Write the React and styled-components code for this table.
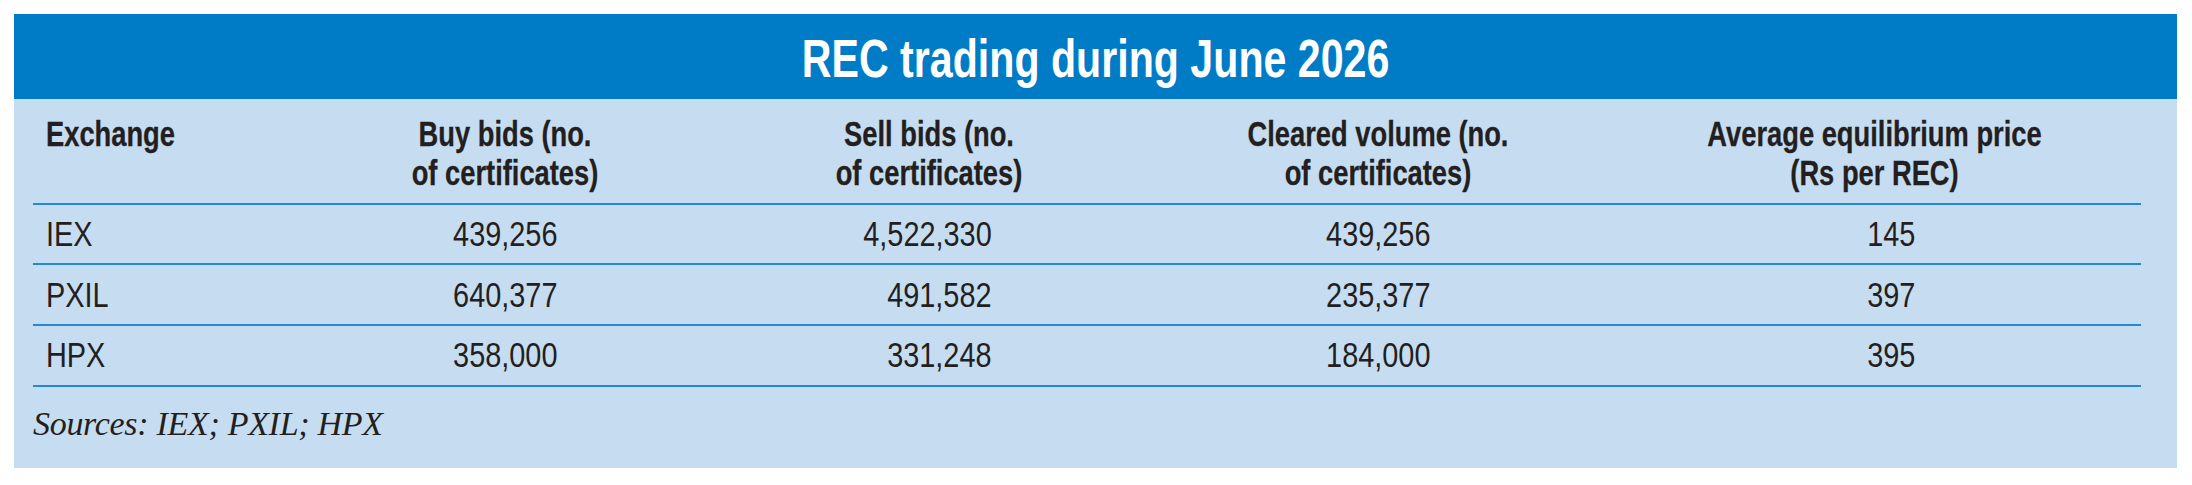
import React from 'react';
import styled, { createGlobalStyle } from 'styled-components';

// ============================================
// DATA
// ============================================
const columns = [
  { key: 'exchange', label: ['Exchange'], align: 'left' },
  { key: 'buy', label: ['Buy bids (no.', 'of certificates)'], align: 'center' },
  { key: 'sell', label: ['Sell bids (no.', 'of certificates)'], align: 'center', numPad: 156 },
  { key: 'cleared', label: ['Cleared volume (no.', 'of certificates)'], align: 'center' },
  { key: 'price', label: ['Average equilibrium price', '(Rs per REC)'], align: 'center', numPad: 226 },
];

const rows = [
  { exchange: 'IEX', buy: '439,256', sell: '4,522,330', cleared: '439,256', price: '145' },
  { exchange: 'PXIL', buy: '640,377', sell: '491,582', cleared: '235,377', price: '397' },
  { exchange: 'HPX', buy: '358,000', sell: '331,248', cleared: '184,000', price: '395' },
];

// no narrow face installed, so the condensed look comes from a horizontal squeeze
const origin = (align, right) => (align === 'left' ? 'left' : right ? 'right' : 'center');

// ============================================
// STYLED COMPONENTS
// ============================================
const GlobalStyle = createGlobalStyle`
  html, body {
    margin: 0;
    padding: 0;
    background: #ffffff;
  }
`;

const Panel = styled.div`
  margin: 14px 0 0 14px;
  width: 2163px;
  height: 454px;
  background: #c6dcf1;
  font-family: 'Liberation Sans', Arial, sans-serif;
  color: #231f20;
  box-sizing: border-box;
`;

const TitleBar = styled.div`
  height: 85px;
  padding-top: 3px;
  box-sizing: border-box;
  background: #007cc7;
  display: flex;
  align-items: center;
  justify-content: center;
`;

const Title = styled.h1`
  margin: 0;
  font-size: 54px;
  line-height: 1;
  font-weight: 700;
  color: #ffffff;
  white-space: nowrap;
  transform: scaleX(0.762);
`;

const Table = styled.div`
  padding: 0 36px 0 19px;
`;

const Row = styled.div`
  display: grid;
  grid-template-columns: 267px 410px 438px 460px 533px;
  border-bottom: 2px solid #2389d6;
`;

const HeadRow = styled(Row)`
  padding: 14.5px 0 10px;
`;

const HeadCell = styled.div`
  padding-left: ${p => (p.$align === 'left' ? '13px' : '0')};
  text-align: ${p => p.$align};
`;

const HeadText = styled.div`
  font-size: 35px;
  line-height: 39.5px;
  font-weight: 700;
  white-space: nowrap;
  -webkit-text-stroke: 0.3px #231f20;
  transform: scaleX(0.78);
  transform-origin: ${p => origin(p.$align)};
`;

const Cell = styled.div`
  height: 58.7px;
  display: flex;
  align-items: center;
  justify-content: ${p => (p.$align === 'left' ? 'flex-start' : p.$numPad ? 'flex-end' : 'center')};
  padding-left: ${p => (p.$align === 'left' ? '13px' : '0')};
  padding-right: ${p => (p.$numPad ? `${p.$numPad}px` : '0')};
`;

const Value = styled.span`
  display: inline-block;
  font-size: 35px;
  font-weight: 400;
  white-space: nowrap;
  transform: scaleX(0.825);
  transform-origin: ${p => origin(p.$align, p.$right)};
`;

const Sources = styled.p`
  margin: 0;
  padding: 17px 0 0 19px;
  font-family: 'Liberation Serif', 'Times New Roman', serif;
  font-style: italic;
  font-size: 34px;
  line-height: 40px;
  letter-spacing: -0.3px;
`;

// ============================================
// COMPONENT
// ============================================
const App = () => (
  <>
    <GlobalStyle />
    <Panel>
      <TitleBar>
        <Title>REC trading during June 2026</Title>
      </TitleBar>

      <Table>
        <HeadRow>
          {columns.map(col => (
            <HeadCell key={col.key} $align={col.align}>
              <HeadText $align={col.align}>
                {col.label.map((line, i) => (
                  <div key={i}>{line}</div>
                ))}
              </HeadText>
            </HeadCell>
          ))}
        </HeadRow>

        {rows.map(row => (
          <Row key={row.exchange}>
            {columns.map(col => (
              <Cell key={col.key} $align={col.align} $numPad={col.numPad}>
                <Value $align={col.align} $right={!!col.numPad}>
                  {row[col.key]}
                </Value>
              </Cell>
            ))}
          </Row>
        ))}
      </Table>

      <Sources>Sources: IEX; PXIL; HPX</Sources>
    </Panel>
  </>
);

export default App;
